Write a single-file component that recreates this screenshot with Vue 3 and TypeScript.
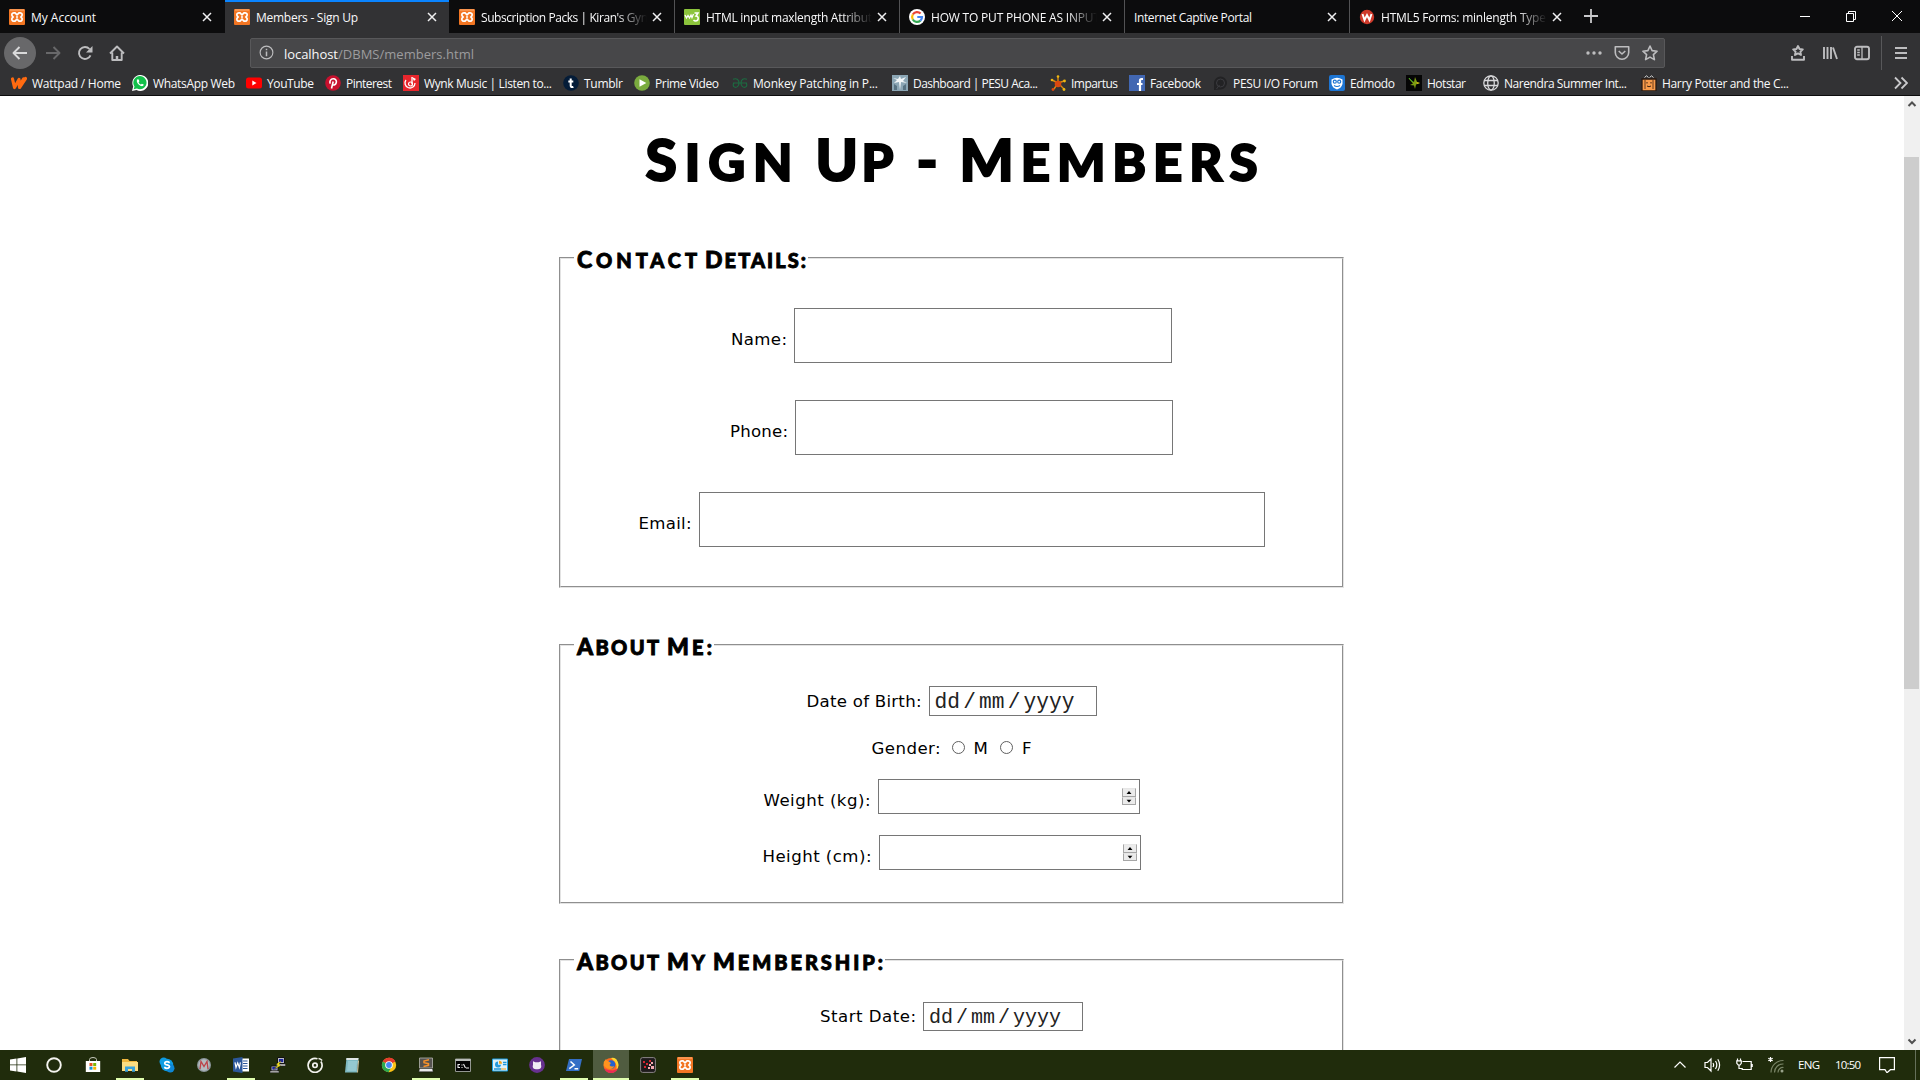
<script setup lang="ts">
interface Tab { title: string; icon: string; width: number; active?: boolean; clipped?: boolean }
interface Bookmark { title: string; icon: string; text: number; cell: number }
interface Task { icon: string; state?: 'open' | 'active'; dx?: number }

// Spreads the letters of a label so that it takes exactly the given width.
const vFit = {
  mounted(el: HTMLElement, binding: { value: number }) {
    const natural = el.getBoundingClientRect().width
    const gaps = (el.textContent ?? '').trim().length - 1
    if (gaps > 0) el.style.letterSpacing = `${(binding.value - natural) / gaps}px`
    el.style.width = `${binding.value}px`
  },
}

const xampp = '<rect width="16" height="16" rx="1" fill="#f37623"/><path d="M1 1h14" stroke="#ffb27a"/><path d="M4.800 3.800h1.200L8 5.800l2-2h1.200a2 2 0 0 1 1.500 3.300L11.900 8l.8.900a2 2 0 0 1-1.500 3.300H10l-2-2-2 2H4.800a2 2 0 0 1-1.500-3.300L4.100 8l-.8-.9a2 2 0 0 1 1.500-3.300zM7 8h2" fill="none" stroke="#fff" stroke-width="1.700"/>'

const icons: Record<string, string> = {
  xampp,
  w3: '<rect width="16" height="16" rx="1" fill="#8cc43c"/><path d="M1 6l1.500 3L4 6.500 5.500 9 7 6l1 2.500L9.500 5" fill="none" stroke="#fff" stroke-width="1.300"/><path d="M10.500 4H14l-2 3c3 0 3 5-.5 5-1 0-1.500-.5-2-1" fill="none" stroke="#fff" stroke-width="1.500"/>',
  google: '<circle cx="8" cy="8" r="8" fill="#fff"/><g fill="none" stroke-width="2.200"><path d="M3.800 5.500A5 5 0 0 1 11.600 4.500" stroke="#ea4335"/><path d="M3.800 10.500a5 5 0 0 1 0-5" stroke="#fbbc05"/><path d="M11.400 11.700a5 5 0 0 1-7.600-1.200" stroke="#34a853"/><path d="M8.300 8H13a5 5 0 0 1-1.600 3.700" stroke="#4285f4"/></g>',
  wred: '<circle cx="8" cy="8" r="7.200" fill="#cf3a2b"/><path d="M3.500 5l2 6L8 6l2.500 5 2-6" fill="none" stroke="#fff" stroke-width="1.900"/>',
  wattpad: '<path d="M1.500 4L3.500 12.500 8 4.500 8.500 12.500 14.500 3.500M9 10l3.500-6" fill="none" stroke="#ff6a10" stroke-width="3.200" stroke-linejoin="round" stroke-linecap="round"/>',
  whatsapp: '<path d="M0 16l1.200-4.400A8 8 0 1 1 4.500 15z" fill="#fff"/><path d="M1.700 14.300l.8-2.900A6.600 6.600 0 1 1 4.900 13.500z" fill="#12c04a"/><path d="M5.500 4.200c-2 1.800.8 5.800 3.500 6.900 1.400.5 2.600-.2 2.700-1.500L9.900 8.700l-.9.900C8 9.200 6.900 8.100 6.600 7.200l.8-.9-.7-1.900z" fill="#fff"/>',
  youtube: '<rect x="0" y="2.500" width="16" height="11" rx="2.500" fill="#f00"/><path d="M6.300 5.600v4.800L10.500 8z" fill="#fff"/>',
  pinterest: '<circle cx="8" cy="8" r="7.800" fill="#c8102e"/><path d="M6.500 13.500L8.200 6.500M5.300 8.700C4 6.200 5.800 3.800 8.200 3.800c2.400 0 3.600 1.700 3.100 3.700-.5 2.200-2.500 3.200-3.800 1.900" fill="none" stroke="#fff" stroke-width="1.600"/>',
  wynk: '<rect width="16" height="16" fill="#e8262d"/><path d="M3 5a5 5 0 1 0 9 3M9 2v7" fill="none" stroke="#fff" stroke-width="1.300"/><circle cx="7.500" cy="9" r="2" fill="none" stroke="#fff" stroke-width="1.200"/><path d="M9 2l4 2-2 2z" fill="#fff"/>',
  tumblr: '<circle cx="8" cy="8" r="7.800" fill="#041c38"/><path d="M7.700 3.500v7.200c0 1.400 1.300 1.700 2.700 1.100M5.300 6.600h5" fill="none" stroke="#fff" stroke-width="2"/>',
  prime: '<circle cx="8" cy="8" r="7.800" fill="#7aab3e"/><path d="M5.500 4.200v7.600L12.300 8z" fill="#fff"/>',
  gfg: '<g fill="none" stroke="#1c6b41" stroke-width="1.200"><path d="M1 4.300c3.500-1.500 6 .3 6 3.700s-2.500 5-4.500 4c-1.500-.8-1.700-3-.5-4M1 8h14M15 4.300c-3.500-1.500-6 .3-6 3.700s2.500 5 4.500 4c1.500-.8 1.700-3 .5-4"/></g>',
  dashboard: '<rect width="16" height="16" fill="#8ba6b5"/><path d="M8 1l1 3 5-2-3 4 4 2-6-1-1 8-1-8-5 1 3-3-4-2 5 1z" fill="#f2f6f8"/><path d="M2 15V9l3 2v4M14 15V9l-3 2v4" fill="#587383"/>',
  impartus: '<g stroke-width="1.400"><path d="M8 8V1M8 8l-6-3M8 8l6-2M8 8l-4 6M8 8l6 6" stroke="#d88a12"/></g><circle cx="8" cy="9" r="3.300" fill="#d9480f"/><g fill="#efb810"><circle cx="8" cy="1.500" r="1.300"/><circle cx="2" cy="5" r="1.300"/><circle cx="14.500" cy="6" r="1.400"/><circle cx="14" cy="14.500" r="1.400"/></g><circle cx="3" cy="14.500" r="1.400" fill="#d9480f"/>',
  facebook: '<rect width="16" height="16" fill="#4267b2"/><path d="M14 4h-1.500q-1.500 0-1.500 1.700V16M8 9h5.500" fill="none" stroke="#fff" stroke-width="2.200"/>',
  pesu: '<path d="M2 15V8a6.500 6.500 0 1 1 6.500 6.500z" fill="#222224"/><circle cx="8.500" cy="8" r="4" fill="none" stroke="#3c3c40"/><path d="M4.500 14l3-4" stroke="#3c3c40"/>',
  edmodo: '<rect width="16" height="16" rx="2" fill="#1d75d3"/><path d="M2.500 4.500Q8 .8 13.500 4.500V9q-1 4-5.500 5.500Q3.500 13 2.500 9z" fill="#fff"/><g fill="none" stroke="#1d75d3" stroke-width="1.200"><circle cx="5.800" cy="6.700" r="1.500"/><circle cx="10.200" cy="6.700" r="1.500"/><path d="M5 10.500q3 2 6 0"/></g>',
  hotstar: '<rect width="16" height="16" fill="#050505"/><path d="M2 3l6 4 1-5 2 5 3 1-4 1.500L9 14l-1-3.500L4 10l3-1.500z" fill="#7d9c12"/><path d="M9 2l1.500 5L14 8l-3 1" fill="#d9b913"/><path d="M3 3l4 4" stroke="#37a42b"/>',
  globe: '<g fill="none" stroke="#d8d8da" stroke-width="1.300"><circle cx="8" cy="8" r="7.200"/><ellipse cx="8" cy="8" rx="3.300" ry="7.200"/><path d="M1 5.500h14M1 10.500h14"/></g>',
  potter: '<path d="M3.500 2.500L5.500.8 7.500 2.500M8.500 2.500l2-1.700 2 1.700" fill="none" stroke="#d5d5d5"/><path d="M1 4h14v12H1z" fill="#f79b4b" stroke="#281a12" stroke-width="1.300"/><path d="M4 5v9M12 5v9" stroke="#6b3b1a" stroke-width="1"/><path d="M6 7v1.500M10 7v1.500M6 11q2 1.500 4 0" stroke="#3a2313" fill="none"/>',
  // taskbar
  windows: '<path d="M0 2.500L6.500 1.500V7.500H0zM7.300 1.400L16 0v7.500H7.300zM0 8.300h6.500v6.100L0 13.500zM7.300 8.300H16V16l-8.700-1.400z" fill="#fff"/>',
  cortana: '<circle cx="8" cy="8" r="6.800" fill="none" stroke="#f4f4f0" stroke-width="1.900"/>',
  store: '<path d="M4.500 4V2.500a3.500 2 0 0 1 7 0V4" fill="none" stroke="#c6cabc" stroke-width="1"/><path d="M.8 4h14.400v11H.8z" fill="#fff"/><path d="M4.500 6h3v3h-3z" fill="#e6501e"/><path d="M8.200 6h3v3h-3z" fill="#7bb500"/><path d="M4.500 9.700h3v3h-3z" fill="#1793d1"/><path d="M8.200 9.700h3v3h-3z" fill="#f8b500"/>',
  explorer: '<path d="M0 2h6l1.500 2H15v3H0z" fill="#f0b73f"/><path d="M0 5h16v9H0z" fill="#fbdd82"/><path d="M3 14.800V9.500h10v5.300h-3V12H6v2.800z" fill="#39a3dc"/>',
  skype: '<circle cx="8" cy="8" r="6.200" fill="#0e9ce2"/><circle cx="4.700" cy="4.700" r="4.200" fill="#0e9ce2"/><circle cx="11.300" cy="11.300" r="4.200" fill="#0e87d6"/><path d="M10.700 5.700Q8 3.700 6 5.300 5 7.200 8 7.900q3.200.8 2.300 2.400Q8 12.300 5.200 10.300" fill="none" stroke="#fff" stroke-width="1.700"/>',
  mathtype: '<circle cx="8" cy="8" r="7" fill="#8d989d"/><circle cx="8" cy="8" r="5.700" fill="#b4bcc0"/><path d="M4 12l1-7.500L8 9.500l3-5L12 12" fill="none" stroke="#bd4247" stroke-width="1.300"/>',
  word: '<path d="M8 1.500h8v13H8z" fill="#fff"/><path d="M10 4h4.500M10 6.500h4.500M10 9h4.500M10 11.500h4.500" stroke="#2b579a" stroke-width="1.200"/><path d="M0 1.600L9.500 0v16L0 14.400z" fill="#2b579a"/><path d="M2 5.300l1 5.200 1.700-4.500 1.700 4.500 1-5.200" fill="none" stroke="#fff" stroke-width="1.200"/>',
  putty: '<path d="M7.500.5h7v6h-7zM1 9h7v5H1z" fill="#b9bcc0" stroke="#111"/><path d="M9 2h4.200v3H9zM2.300 10h4.300v2.500H2.300z" fill="#1c23a8"/><path d="M6.500 7h9v2h-9zM0 14h9v1.700H0z" fill="#ddd" stroke="#222" stroke-width=".6"/><path d="M11.500 3.500L6.500 7l1.500 1.500L3.500 12.500l7-3.700L9 7.300z" fill="#ffec19" stroke="#3c3900" stroke-width=".3"/>',
  groove: '<path d="M13.900 4.500A7 7 0 1 1 10.500 1.800" fill="none" stroke="#f2f2ee" stroke-width="1.700"/><circle cx="8" cy="8.300" r="2.200" fill="none" stroke="#f2f2ee" stroke-width="1.700"/><path d="M11.500 1.500q2 .3 3.700 2" fill="none" stroke="#f2f2ee" stroke-width="1.300"/>',
  notepad: '<path d="M2.500 1h12L13 15.500H1z" fill="#7eb9c2"/><path d="M2.500 1h12l-.3 2H2.300z" fill="#dfe6e6"/><path d="M4 5h9M3.800 7h9M3.600 9h9M3.400 11h9M3.200 13h9" stroke="#b7e0e6" stroke-width=".8"/><path d="M14 3l1 1-1 11.500h-1z" fill="#d2c49f"/>',
  chrome: '<circle cx="8" cy="8" r="7.200" fill="#fbc116"/><path d="M8 8L1.760 4.400A7.200 7.200 0 0 1 14.240 4.400z" fill="#e33b2e"/><path d="M8 .8a7.200 7.200 0 0 1 6.240 3.600H8z" fill="#e33b2e"/><path d="M1.760 4.400A7.200 7.200 0 0 0 7.500 15.180L10.500 10z" fill="#2da94f"/><circle cx="8" cy="8" r="3.800" fill="#fff"/><circle cx="8" cy="8" r="2.900" fill="#4688f1"/>',
  sublime: '<path d="M1.500 1h13v10h-13z" fill="#55524f" stroke="#b5b5b0" stroke-width=".8"/><path d="M1.500 11.500h13l.7 3.300H.8z" fill="#e9e9e9" stroke="#111" stroke-width=".5"/><path d="M11 2.800L6 4v1.700l4.500 1v1.600L5.500 9.500" fill="none" stroke="#f6912a" stroke-width="1.500"/>',
  cmd: '<path d="M.5 2h15v12.500H.5z" fill="#020202" stroke="#929691"/><path d="M.5 2h15v2H.5z" fill="#b9bdb9"/><path d="M5 7.500H3v3h2M7 7.500v1M7 10v1M8.500 7l2 4M11 11h3" fill="none" stroke="#eee" stroke-width="1.100"/>',
  control: '<path d="M.5 2h15v12H.5z" fill="#dceffa" stroke="#1ba0e4"/><path d="M6 4.500v3.200h3A3 3 0 1 1 6 4.500z" fill="#2699dc"/><path d="M7 3.700a3 3 0 0 1 3 3H7z" fill="#f3a21b"/><path d="M11 5.500h3.500M11 7.700h3.500M2 12h7" stroke="#1f96d8" stroke-width="1.300"/><path d="M9 12h5" stroke="#f3a21b"/>',
  github: '<circle cx="8" cy="8" r="7.900" fill="#67308f"/><path d="M4 4.200l2.300 1h3.400l2.300-1v3.500c1 3.300-.7 4.500-4 4.500S3 11 4 7.700z" fill="#f1ecf5"/>',
  powershell: '<path d="M3 2h13l-2.700 12H0z" fill="#346fc6"/><path d="M4.500 4.500L8.300 8l-5 3.600M8.500 11.700h3.700" fill="none" stroke="#fff" stroke-width="1.500"/>',
  firefox: '<circle cx="8" cy="8.400" r="7.500" fill="#ff6a1e"/><path d="M8 1q5-1 6.500 3.500Q17 9 13 13.500 15 7 11 4z" fill="#ffd72e"/><circle cx="8" cy="7.600" r="4.300" fill="#2462ce"/><path d="M.6 8Q.5 4 3 2q0 2 2.500 2.300L8 6 6.500 8q1.500 2.500 4.800 1-1.200 3.500-5 3Q2 11 .6 8z" fill="#ff931e"/><path d="M1 11q2 5 7 5 5 0 7-5-3 3-7 2.300Q3 13 1 11z" fill="#e92b58"/>',
  shell: '<rect x=".6" y=".6" width="14.800" height="14.800" rx="2" fill="#1d1a1b" stroke="#8b8588"/><path d="M3 4h2v2H3zM6 6h2v2H6zM9 3h2v2H9zM4 9h2v2H4z" fill="#d52531"/><path d="M9 7h2v2H9zM11 5h2v2h-2zM11 9h3v3h-3zM8 10h2v2H8z" fill="#f4aab2"/>',
}

const tabs: Tab[] = [
  { title: 'My Account', icon: 'xampp', width: 65 },
  { title: 'Members - Sign Up', icon: 'xampp', width: 102, active: true },
  { title: "Subscription Packs | Kiran's Gyn", icon: 'xampp', width: 167, clipped: true },
  { title: 'HTML input maxlength Attribut', icon: 'w3', width: 166, clipped: true },
  { title: 'HOW TO PUT PHONE AS INPUT', icon: 'google', width: 169, clipped: true },
  { title: 'Internet Captive Portal', icon: '', width: 118 },
  { title: 'HTML5 Forms: minlength Type', icon: 'wred', width: 165, clipped: true },
]

const bookmarks: Bookmark[] = [
  { title: 'Wattpad / Home', icon: 'wattpad', text: 89, cell: 121 },
  { title: 'WhatsApp Web', icon: 'whatsapp', text: 82, cell: 114 },
  { title: 'YouTube', icon: 'youtube', text: 47, cell: 79 },
  { title: 'Pinterest', icon: 'pinterest', text: 46, cell: 78 },
  { title: 'Wynk Music | Listen to...', icon: 'wynk', text: 128, cell: 160 },
  { title: 'Tumblr', icon: 'tumblr', text: 39, cell: 71 },
  { title: 'Prime Video', icon: 'prime', text: 64, cell: 98 },
  { title: 'Monkey Patching in P...', icon: 'gfg', text: 125, cell: 160 },
  { title: 'Dashboard | PESU Aca...', icon: 'dashboard', text: 125, cell: 158 },
  { title: 'Impartus', icon: 'impartus', text: 47, cell: 79 },
  { title: 'Facebook', icon: 'facebook', text: 51, cell: 83 },
  { title: 'PESU I/O Forum', icon: 'pesu', text: 85, cell: 117 },
  { title: 'Edmodo', icon: 'edmodo', text: 45, cell: 77 },
  { title: 'Hotstar', icon: 'hotstar', text: 39, cell: 77 },
  { title: 'Narendra Summer Int...', icon: 'globe', text: 123, cell: 158 },
  { title: 'Harry Potter and the C...', icon: 'potter', text: 127, cell: 160 },
]

const tasks: Task[] = [
  { icon: 'windows', dx: -1 }, { icon: 'cortana', dx: -2 }, { icon: 'store' }, { icon: 'explorer', state: 'open' },
  { icon: 'skype' }, { icon: 'mathtype' }, { icon: 'word', state: 'open' }, { icon: 'putty' }, { icon: 'groove' },
  { icon: 'notepad' }, { icon: 'chrome' }, { icon: 'sublime', state: 'open' }, { icon: 'cmd' }, { icon: 'control' },
  { icon: 'github' }, { icon: 'powershell', state: 'open' }, { icon: 'firefox', state: 'active' }, { icon: 'shell' },
  { icon: 'xampp', state: 'open' },
]

const heading = [
  { word: 'SIGN', width: 147 }, { word: 'UP', width: 78 }, { word: '-', width: 20 }, { word: 'MEMBERS', width: 298 },
]
const contactLegend = [{ word: 'CONTACT', width: 120 }, { word: 'DETAILS:', width: 101 }]
const aboutLegend = [{ word: 'ABOUT', width: 82 }, { word: 'ME:', width: 45 }]
const memberLegend = [{ word: 'ABOUT', width: 82 }, { word: 'MY', width: 38 }, { word: 'MEMBERSHIP:', width: 170 }]

const contactFields = [
  { label: 'Name:', text: 56, box: 378 },
  { label: 'Phone:', text: 58, box: 378 },
  { label: 'Email:', text: 53, box: 566 },
]
const measures = [
  { label: 'Weight (kg):', text: 107 },
  { label: 'Height (cm):', text: 109 },
]
</script>

<template>
  <div class="screen">
    <header class="browser">
      <div class="tabstrip">
        <div v-for="(tab, i) in tabs" :key="i" class="tab" :class="{ active: tab.active, divided: i >= 2 }">
          <svg v-if="tab.icon" class="favicon" viewBox="0 0 16 16" v-html="icons[tab.icon]"></svg>
          <span class="tab-title" :class="{ clipped: tab.clipped }"><span v-fit="tab.width" class="fit">{{ tab.title }}</span></span>
          <svg class="tab-close" viewBox="0 0 10 10"><path d="M1 1l8 8M9 1L1 9" /></svg>
        </div>
        <svg class="new-tab" viewBox="0 0 14 14"><path d="M7 0v14M0 7h14" /></svg>
        <div class="window-buttons">
          <svg viewBox="0 0 12 12"><path d="M1 6.500h10" /></svg>
          <svg viewBox="0 0 12 12"><path d="M1.500 3.500h7v8h-7zM3.500 3.500v-2h7v8h-2" /></svg>
          <svg viewBox="0 0 12 12"><path d="M1 1l10 10M11 1L1 11" /></svg>
        </div>
      </div>

      <div class="toolbar">
        <div class="nav">
          <span class="back"><svg viewBox="0 0 16 16"><path d="M15 8H1.500M7.500 2L1.500 8l6 6" /></svg></span>
          <svg class="dim" viewBox="0 0 16 16"><path d="M1 8h13.500M8.500 2l6 6-6 6" /></svg>
          <svg viewBox="0 0 16 16"><path d="M13.500 10.300A6 6 0 1 1 12.500 4" /><path class="solid" d="M15.500 1v6.500H9z" /></svg>
          <svg viewBox="0 0 16 16"><path d="M1 8.500L8 1.500l7 7M3.300 7.500V15h9.400V7.500" /><path d="M8 15v-4" stroke-width="2.500" /></svg>
        </div>
        <div class="urlbar">
          <svg class="info" viewBox="0 0 16 16"><circle cx="8" cy="8" r="6.800" /><path d="M8 7v5M8 4v1.600" stroke-width="1.600" /></svg>
          <span v-fit="54" class="fit host">localhost</span><span v-fit="136" class="fit path">/DBMS/members.html</span>
          <div class="url-actions">
            <svg viewBox="0 0 16 16"><g class="solid"><circle cx="2" cy="8" r="1.700" /><circle cx="8" cy="8" r="1.700" /><circle cx="14" cy="8" r="1.700" /></g></svg>
            <svg viewBox="0 0 16 16"><path d="M1.300 1.800h13.400v5.700a6.700 6.700 0 0 1-13.400 0zM4.700 6L8 9l3.300-3" /></svg>
            <svg viewBox="0 0 16 16"><path d="M8 1l2.100 4.600 5 .6-3.700 3.400 1 5L8 12.100l-4.400 2.500 1-5L.9 6.200l5-.6z" /></svg>
          </div>
        </div>
        <div class="tools">
          <svg viewBox="0 0 16 16"><path d="M8 1l1.500 3 3.300.4-2.400 2.300.6 3.300L8 8.400 5 10l.6-3.300-2.400-2.300L6.500 4zM2 11v3.800h12V11" /></svg>
          <svg viewBox="0 0 16 16"><path d="M2 2v12M5.500 2v12M9 2v12M11 2.500l4 11.500" stroke-width="1.900" /></svg>
          <svg viewBox="0 0 16 16"><rect x="1" y="1.800" width="14" height="12.400" rx="2" /><path d="M8 2v12M3.200 5h2.600M3.200 7.500h2.600M3.200 10h2.600" stroke-width="1.300" /></svg>
          <i class="separator"></i>
          <svg class="menu" viewBox="0 0 16 16"><path d="M2 3h12M2 8h12M2 13h12" /></svg>
        </div>
      </div>

      <nav class="bookmarks">
        <div v-for="b in bookmarks" :key="b.title" class="bookmark" :style="{ width: b.cell + 'px' }">
          <svg viewBox="0 0 16 16" v-html="icons[b.icon]"></svg>
          <span v-fit="b.text" class="fit">{{ b.title }}</span>
        </div>
        <svg class="overflow" viewBox="0 0 14 14"><path d="M1 1.500L6.500 7 1 12.500M7.500 1.500L13 7l-5.500 5.500" /></svg>
      </nav>
    </header>

    <div class="viewport">
      <main class="page">
        <h1 class="display">
          <span v-for="h in heading" :key="h.word" v-fit="h.width" class="fit"><span class="cap">{{ h.word[0] }}</span>{{ h.word.slice(1) }}</span>
        </h1>

        <section class="group contact">
          <h2 class="legend display"><span v-for="l in contactLegend" :key="l.word" v-fit="l.width" class="fit"><span class="cap">{{ l.word[0] }}</span>{{ l.word.slice(1) }}</span></h2>
          <div v-for="f in contactFields" :key="f.label" class="row tall">
            <label v-fit="f.text" class="fit">{{ f.label }}</label>
            <input type="text" class="box" :style="{ width: f.box + 'px' }" />
          </div>
        </section>

        <section class="group about">
          <h2 class="legend display"><span v-for="l in aboutLegend" :key="l.word" v-fit="l.width" class="fit"><span class="cap">{{ l.word[0] }}</span>{{ l.word.slice(1) }}</span></h2>
          <div class="row date">
            <label v-fit="115" class="fit">Date of Birth:</label>
            <div class="box date-box"><span>dd</span><span>/</span><span>mm</span><span>/</span><span>yyyy</span></div>
          </div>
          <div class="row gender">
            <label v-fit="69" class="fit">Gender:</label>
            <input type="radio" name="gender" class="first" /><span class="option">M</span>
            <input type="radio" name="gender" /><span class="option">F</span>
          </div>
          <div v-for="m in measures" :key="m.label" class="row number">
            <label v-fit="m.text" class="fit">{{ m.label }}</label>
            <div class="box number-box">
              <div class="spinner">
                <svg viewBox="0 0 14 8"><path d="M4 6l3-3.500L10 6z" /></svg>
                <svg viewBox="0 0 14 8"><path d="M4 2h6L7 5.500z" /></svg>
              </div>
            </div>
          </div>
        </section>

        <section class="group membership">
          <h2 class="legend display"><span v-for="l in memberLegend" :key="l.word" v-fit="l.width" class="fit"><span class="cap">{{ l.word[0] }}</span>{{ l.word.slice(1) }}</span></h2>
          <div class="row date start">
            <label v-fit="96" class="fit">Start Date:</label>
            <div class="box date-box"><span>dd</span><span>/</span><span>mm</span><span>/</span><span>yyyy</span></div>
          </div>
        </section>
      </main>
      <div class="scrollbar">
        <svg viewBox="0 0 16 16"><path d="M4.500 9.500L8 6l3.500 3.500" /></svg>
        <div class="track"><div class="thumb"></div></div>
        <svg viewBox="0 0 16 16"><path d="M4.500 6L8 9.500 11.500 6" /></svg>
      </div>
    </div>

    <footer class="taskbar">
      <div class="tasks">
        <div v-for="t in tasks" :key="t.icon" class="task" :class="t.state">
          <svg viewBox="0 0 16 16" :style="{ marginLeft: (t.dx ?? 0) * 2 + 'px' }" v-html="icons[t.icon]"></svg>
        </div>
      </div>
      <div class="tray">
        <svg class="chevron" viewBox="0 0 14 14"><path d="M1.500 9.500L7 4l5.500 5.500" /></svg>
        <svg class="speaker" viewBox="0 0 17 16"><path d="M1 5.500h2.500L7 2v12l-3.500-3.500H1zM9 6q1.300 2 0 4M11.500 4q2.600 4 0 8M13.800 2.300q3.600 5.700 0 11.400" /></svg>
        <svg class="battery" viewBox="0 0 17 16"><path d="M6.500 4.500h8.700v8h-9V11M16.200 7v3M1.500 1.500v2M4.500 1.500v2M.8 3.800h4.500v2.500L4 8H2.200L.8 6.300zM3 8v3.500h3" /></svg>
        <svg class="wifi" viewBox="0 0 16 16"><g stroke="#788466"><path d="M3 15.500A12 12 0 0 1 15.500 3.500M6.500 15.500a8.500 8.500 0 0 1 9-8.500M10 15.500a5 5 0 0 1 5.500-5" /></g><circle cx="14" cy="14" r="1.500" fill="#98a28a" stroke="none" /><path d="M2.500 0v5M.3 1.300l4.400 2.500M4.700 1.300L.3 3.800" /></svg>
        <span v-fit="22" class="fit lang">ENG</span>
        <span v-fit="26" class="fit clock">10:50</span>
        <svg class="notify" viewBox="0 0 16 16"><path d="M.6.700h14.800v12h-4L8 15.800 6 12.700H.6z" /></svg>
        <i class="peek"></i>
      </div>
    </footer>
  </div>
</template>

<style>
html, body { background: #fff; overflow: hidden; }
</style>

<style scoped>
* { box-sizing: border-box; }
svg { flex: none; display: block; }
.fit { display: inline-block; white-space: nowrap; flex: none; }
.screen { width: 1920px; height: 1080px; display: flex; flex-direction: column; overflow: hidden; background: #fff; }

.browser { height: 96px; flex: none; background: #323234; border-bottom: 1px solid #0c0c0d; color: #f9f9fa; font: 12px/16px "Open Sans", "Noto Sans", sans-serif; }
.tabstrip { height: 33px; background: #0c0c0d; display: flex; align-items: center; }
.tab { width: 225px; height: 33px; display: flex; align-items: center; padding: 1px 12px 0 9px; flex: none; }
.tab:first-child { padding-right: 13px; }
.tab:nth-child(2) { width: 224px; }
.tab.divided { border-left: 1px solid #525254; padding-left: 9px; }
.tab:nth-child(3) { border-left-color: #0c0c0d; }
.tab.active { background: #323234; border-top: 2px solid #0a84ff; padding-top: 0; padding-bottom: 1px; }
.favicon { width: 16px; height: 16px; margin-right: 6px; }
.tab-title { width: 168px; overflow: hidden; height: 20px; line-height: 18px; padding-top: 2px; }
.tab-title.clipped { -webkit-mask-image: linear-gradient(90deg, #000 136px, transparent 166px); mask-image: linear-gradient(90deg, #000 136px, transparent 166px); }
.tab-close { width: 10px; height: 10px; margin-left: auto; stroke: #f0f0f1; stroke-width: 1.500; }
.new-tab { width: 14px; height: 14px; margin: 0 0 1px 10px; stroke: #c9c9cb; stroke-width: 1.800; }
.window-buttons { margin: 0 17px 1px auto; display: flex; gap: 34px; }
.window-buttons svg { width: 12px; height: 12px; stroke: #fff; stroke-width: 1; fill: none; }

.toolbar { height: 37px; margin-top: 1px; display: flex; align-items: center; }
.toolbar svg { width: 16px; height: 16px; fill: none; stroke: #bdbdbf; stroke-width: 1.900; stroke-linejoin: round; }
.toolbar .solid { fill: #bdbdbf; stroke: none; }
.nav { width: 250px; padding-left: 4px; display: flex; align-items: center; gap: 16px; }
.back { width: 32px; height: 32px; border-radius: 50%; background: #68686a; display: grid; place-items: center; margin-right: -7px; }
.toolbar .back svg { stroke: #d9d9da; }
.toolbar svg.dim { stroke: #68686a; }
.urlbar { width: 1415px; height: 30px; border: 1px solid #58585a; border-radius: 2px; background: #474749; display: flex; align-items: center; padding-left: 8px; font-size: 13px; line-height: 18px; }
.urlbar .fit { padding-top: 2px; }
.toolbar svg.info { width: 15px; height: 15px; stroke-width: 1.200; margin-right: 10px; }
.path { color: #9c9c9e; }
.url-actions { display: flex; gap: 12px; margin: 0 6px 0 auto; }
.toolbar .url-actions svg { stroke-width: 1.600; }
.tools { margin-left: 125px; display: flex; align-items: center; gap: 16px; }
.tools .separator { width: 1px; height: 34px; background: #58585a; margin: 0 -5px 0 -5px; }

.bookmarks { height: 24px; display: flex; align-items: center; padding-left: 11px; }
.bookmark { display: flex; align-items: center; flex: none; }
.bookmark svg { width: 16px; height: 16px; margin-right: 5px; }
.bookmark .fit { padding-top: 2px; }
.overflow { width: 14px; height: 14px; margin: 0 12px 0 auto; fill: none; stroke: #c9c9cb; stroke-width: 1.800; }

.viewport { height: 954px; flex: none; display: flex; overflow: hidden; }
.page { width: 1904px; height: 954px; padding-right: 1px; overflow: hidden; display: flex; flex-direction: column; align-items: center; color: #000; font: 16.600px/20px "DejaVu Sans", Verdana, sans-serif; }
.display { font-family: Lato, "Open Sans", sans-serif; font-weight: 900; display: flex; align-items: baseline; margin: 0; -webkit-text-stroke: 1px #000; }
h1.display { margin: 33px 0 0; height: 60px; line-height: 60px; font-size: 51px; -webkit-text-stroke-width: 2px; gap: 23px; flex: none; }
h1 .cap { font-size: 57px; }
.group { width: 785px; border: 2px groove #e3e3e3; flex: none; }
.legend { width: max-content; height: 30px; line-height: 30px; font-size: 20px; margin: -15px 0 0 13px; padding: 0 2px 0 3px; gap: 8px; background: #fff; -webkit-text-stroke-width: .9px; }
.legend .cap { font-size: 23px; }
.contact { height: 331px; margin-top: 68px; }
.about { height: 260px; margin-top: 56px; }
.membership { height: 200px; margin-top: 55px; }
.row { display: flex; justify-content: center; gap: 7px; }
.box { border: 1px solid #767676; background: #fff; padding: 0; outline: 0; border-radius: 0; display: block; flex: none; }
.tall { height: 55px; margin-top: 37px; }
.legend + .tall { margin-top: 34px; }
.tall label { padding-top: 22px; }
.tall .box { height: 55px; }
.date { height: 30px; margin-top: 25px; }
.date label { padding-top: 6px; }
.date-box { width: 168px; height: 30px; display: flex; gap: 3.200px; padding-left: 5px; font: 21.200px/30px "Liberation Mono", "Courier New", monospace; color: #222; }
.start { height: 29px; margin-top: 26px; }
.start label { padding-top: 5px; }
.start .date-box { width: 160px; height: 29px; font-size: 20px; line-height: 29px; gap: 3px; }
.gender { height: 20px; margin-top: 22px; gap: 0; }
.gender label, .option { padding-top: 1px; }
.gender input { appearance: none; width: 13px; height: 13px; border: 1px solid #5f5f5f; border-radius: 50%; margin: 3px 9px 0 12px; background: #fff; }
.gender input.first { margin-left: 11px; }
.number { height: 35px; margin-top: 21px; }
.number label { padding-top: 12px; }
.number-box { width: 262px; height: 35px; display: flex; justify-content: flex-end; padding: 8px 3px; }
.spinner { width: 14px; height: 17px; display: flex; flex-direction: column; justify-content: space-between; }
.spinner svg { width: 14px; height: 8.500px; background: #ebebeb; border: 1px solid #a6a6a6; border-top-color: #e6e6e6; fill: #000; }

.scrollbar { width: 16px; height: 954px; background: #f0f0f0; display: flex; flex-direction: column; }
.scrollbar svg { width: 16px; height: 17px; fill: none; stroke: #505050; stroke-width: 2; }
.track { flex: 1; padding-top: 44px; }
.thumb { height: 532px; width: 15px; background: #cdcdcd; }

.taskbar { height: 30px; flex: none; background: #202c0c; display: flex; justify-content: space-between; }
.tasks { display: flex; gap: 1px; padding-left: 1px; }
.task { width: 36px; height: 30px; display: flex; align-items: center; justify-content: center; }
.task svg { width: 16px; height: 16px; }
.task.open { background: linear-gradient(#e0ffb0, #e0ffb0) 50% 100% / 28px 2px no-repeat; }
.task.active { background: linear-gradient(#e0ffb0, #e0ffb0) 50% 100% / 36px 2px no-repeat #505c40; }
.tray { display: flex; align-items: center; color: #fff; font: 12px/16px "Open Sans", "Noto Sans", sans-serif; }
.tray svg { fill: none; stroke: #fff; stroke-width: 1.200; }
.chevron { width: 14px; height: 14px; margin-right: 17px; }
.speaker { width: 17px; height: 16px; margin-right: 15px; }
.battery { width: 17px; height: 16px; margin-right: 15px; }
.wifi { width: 16px; height: 16px; margin-right: 14px; }
.lang { margin-right: 15px; font-size: 11.500px; }
.clock { margin-right: 18px; font-size: 11.500px; }
.notify { width: 16px; height: 16px; margin-right: 20px; }
.peek { width: 1px; height: 30px; background: #65705a; margin-right: 4px; }
</style>
